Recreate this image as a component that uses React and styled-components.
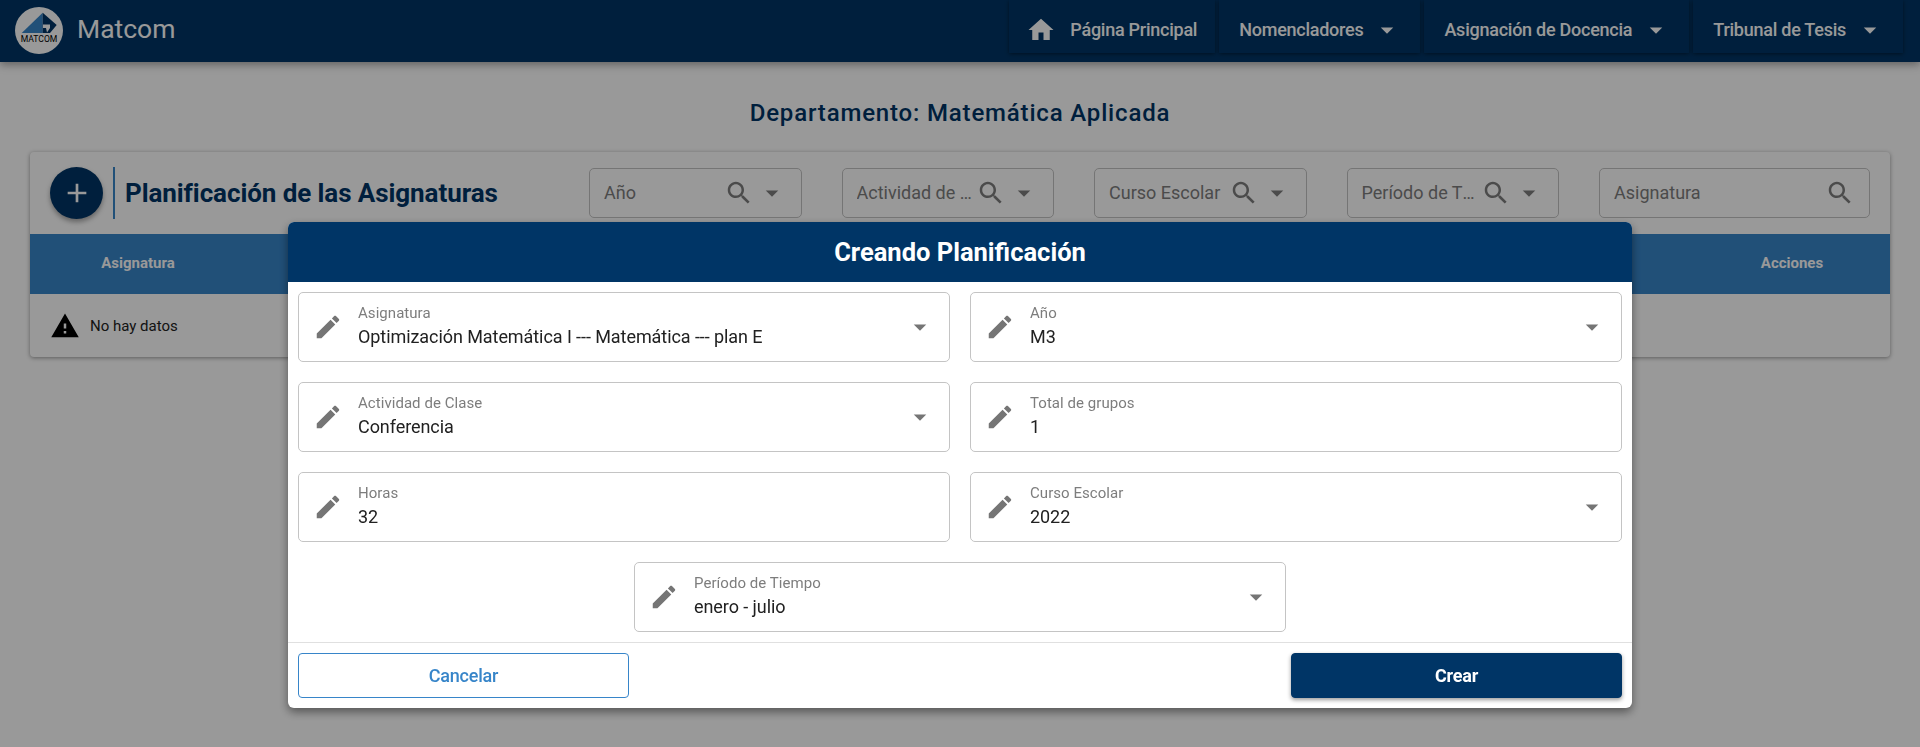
import styled, { createGlobalStyle } from 'styled-components';

const GlobalStyle = createGlobalStyle`
  html, body {
    margin: 0;
    padding: 0;
    background: #fff;
    font-family: Roboto, "Liberation Sans", sans-serif;
  }
  * {
    box-sizing: border-box;
  }
`;

const navy = '#003566';
const blue = '#3785c9';

const Page = styled.div`
  width: 100%;
  height: 747px;
  overflow: hidden;
  background: #fff;
`;

const Navbar = styled.header`
  height: 62px;
  background: ${navy};
  display: flex;
  align-items: flex-start;
  justify-content: space-between;
  padding: 0 17px 0 15px;
  box-shadow: 0 3px 8px rgba(0, 0, 0, 0.35);
`;

const Brand = styled.div`
  display: flex;
  align-items: center;
  gap: 14px;
  height: 60px;
  color: #fff;
  font-size: 26.5px;
  line-height: 58px;
`;

const BrandName = styled.span`
  margin-top: -2px;
`;

const NavMenu = styled.nav`
  display: flex;
  gap: 4px;
`;

const NavItem = styled.div`
  height: 53px;
  display: flex;
  align-items: center;
  gap: ${(p) => p.$gap || 9}px;
  padding: 6px 18px 0;
  padding-left: ${(p) => p.$left || 20}px;
  color: #fff;
  font-size: 18px;
  font-weight: 500;
  letter-spacing: -0.25px;
  box-shadow: 0 1px 4px rgba(0, 0, 0, 0.45);
`;

const Main = styled.main`
  padding: 0 30px;
`;

const Department = styled.h2`
  margin: 0;
  padding-top: 34px;
  height: 90px;
  text-align: center;
  color: ${navy};
  font-size: 24px;
  font-weight: 500;
  line-height: 34px;
  letter-spacing: 0.83px;
`;

const Card = styled.section`
  background: #fff;
  border-radius: 4px;
  box-shadow: 0 1px 4px rgba(0, 0, 0, 0.4);
`;

const CardHeader = styled.div`
  height: 82px;
  display: flex;
  align-items: center;
  padding: 0 20px;
`;

const AddButton = styled.div`
  width: 53px;
  height: 52px;
  border-radius: 50%;
  background: ${navy};
  color: #fff;
  display: flex;
  align-items: center;
  justify-content: center;
  box-shadow: 0 3px 5px rgba(0, 0, 0, 0.35);
  flex: none;
`;

const TitleBox = styled.div`
  height: 52px;
  width: 476px;
  margin-left: 10px;
  padding-left: 10px;
  border-left: 2px solid ${blue};
  display: flex;
  align-items: center;
  flex: none;
`;

const CardTitle = styled.h1`
  margin: 0;
  color: ${navy};
  font-size: 26px;
  font-weight: 700;
  letter-spacing: -0.08px;
  white-space: nowrap;
`;

const Filters = styled.div`
  display: flex;
  gap: 40px;
  flex: 1;
`;

const Filter = styled.div`
  width: ${(p) => p.$width || 212.5}px;
  height: 50px;
  flex: none;
  display: flex;
  align-items: center;
  gap: 3px;
  padding: 0 14px 0 14px;
  border: 1px solid #c4c4c4;
  border-radius: 5px;
  color: #7d7d7d;
  font-size: 18px;
`;

const FilterText = styled.span`
  flex: 1;
  min-width: 0;
  padding-bottom: 2px;
  white-space: nowrap;
  overflow: hidden;
  text-overflow: ellipsis;
`;

const TableHead = styled.div`
  height: 60px;
  background: ${blue};
  display: flex;
  justify-content: space-between;
  color: #fff;
  font-size: 15px;
  font-weight: 700;
`;

const HeadCell = styled.div`
  width: ${(p) => p.$width}px;
  padding-bottom: 2px;
  display: flex;
  align-items: center;
  justify-content: center;
`;

const EmptyRow = styled.div`
  height: 63px;
  display: flex;
  align-items: center;
  gap: 10px;
  padding-left: 20px;
  color: #222;
  font-size: 15px;
`;

const Backdrop = styled.div`
  position: fixed;
  inset: 0;
  background: rgba(0, 0, 0, 0.4);
  display: flex;
  justify-content: center;
  align-items: flex-start;
  padding-top: 222px;
`;

const Dialog = styled.div`
  width: 1344px;
  background: #fff;
  border-radius: 6px;
  overflow: hidden;
  box-shadow: 0 4px 10px rgba(0, 0, 0, 0.45);
`;

const DialogHeader = styled.div`
  height: 60px;
  background: ${navy};
  color: #fff;
  display: flex;
  align-items: center;
  justify-content: center;
  font-size: 25.5px;
  font-weight: 700;
`;

const FieldGrid = styled.div`
  display: grid;
  grid-template-columns: 1fr 1fr;
  gap: 20px;
  padding: 10px;
`;

const Field = styled.div`
  height: 70px;
  display: flex;
  align-items: center;
  gap: 15px;
  padding: 0 14px;
  border: 1px solid #c4c4c4;
  border-radius: 5px;
  ${(p) => p.$center && 'grid-column: 1 / -1; justify-self: center; width: calc(50% - 10px);'}
`;

const FieldBody = styled.div`
  flex: 1;
  display: flex;
  flex-direction: column;
  gap: 1px;
  padding-bottom: 2px;
`;

const FieldLabel = styled.span`
  color: #7d7d7d;
  font-size: 15px;
  line-height: 20px;
  letter-spacing: 0.05px;
`;

const FieldValue = styled.span`
  color: #212121;
  font-size: 18px;
  line-height: 26px;
  letter-spacing: -0.07px;
`;

const DialogFooter = styled.div`
  display: flex;
  justify-content: space-between;
  padding: 10px;
  border-top: 1px solid #e0e0e0;
`;

const Button = styled.button`
  width: 331px;
  height: 45px;
  border-radius: 4px;
  font-family: inherit;
  font-size: 18px;
  font-weight: ${(p) => (p.$primary ? 700 : 500)};
  letter-spacing: -0.2px;
  border: 1px solid ${(p) => (p.$primary ? navy : blue)};
  background: ${(p) => (p.$primary ? navy : '#fff')};
  color: ${(p) => (p.$primary ? '#fff' : blue)};
  box-shadow: ${(p) => (p.$primary ? '0 2px 4px rgba(0,0,0,0.4)' : 'none')};
`;

const Icon = ({ d, size = 30, color = 'currentColor' }) => (
  <svg width={size} height={size} viewBox="0 0 24 24" fill={color} style={{ flex: 'none', display: 'block' }}>
    <path d={d} />
  </svg>
);

const paths = {
  home: 'M10 20v-6h4v6h5v-8h3L12 3 2 12h3v8z',
  drop: 'M7 10l5 5 5-5z',
  add: 'M19 13h-6v6h-2v-6H5v-2h6V5h2v6h6v2z',
  search: 'M15.5 14h-.79l-.28-.27C15.41 12.59 16 11.11 16 9.5 16 5.91 13.09 3 9.5 3S3 5.91 3 9.5 5.91 16 9.5 16c1.61 0 3.09-.59 4.23-1.57l.27.28v.79l5 4.99L20.49 19l-4.99-5zm-6 0C7.01 14 5 11.99 5 9.5S7.01 5 9.5 5 14 7.01 14 9.5 11.99 14 9.5 14z',
  edit: 'M3 17.25V21h3.75L17.81 9.94l-3.75-3.75L3 17.25zM20.71 7.04c.39-.39.39-1.02 0-1.41l-2.34-2.34c-.39-.39-1.02-.39-1.41 0l-1.83 1.83 3.75 3.75 1.83-1.83z',
  warning: 'M1 21h22L12 2 1 21zm12-3h-2v-2h2v2zm0-4h-2v-4h2v4z',
};

const Logo = () => (
  <svg width="48" height="47" viewBox="0 0 48 47" style={{ flex: 'none' }}>
    <ellipse cx="24" cy="23.5" rx="24" ry="23.5" fill="#fff" />
    <polygon points="6.7,26 27.7,5.7 27.7,26" fill="#3785c9" />
    <polygon points="27.7,5.7 41.7,18 35,26 27.7,26" fill="#003566" />
    <polygon points="28,17.5 35,17.5 35,21 32,25.5 31,21 28,21" fill="#fff" />
    <text x="24" y="34.5" textAnchor="middle" fontSize="8.6" fontFamily="Roboto, sans-serif" fill="#000">MATCOM</text>
  </svg>
);

const filters = [
  { label: 'Año' },
  { label: 'Actividad de Clase' },
  { label: 'Curso Escolar' },
  { label: 'Período de Tiempo' },
];

const fields = [
  { label: 'Asignatura', value: 'Optimización Matemática I --- Matemática --- plan E', select: true },
  { label: 'Año', value: 'M3', select: true },
  { label: 'Actividad de Clase', value: 'Conferencia', select: true },
  { label: 'Total de grupos', value: '1' },
  { label: 'Horas', value: '32' },
  { label: 'Curso Escolar', value: '2022', select: true },
  { label: 'Período de Tiempo', value: 'enero - julio', select: true, center: true },
];

export default function App() {
  return (
    <Page>
      <GlobalStyle />
      <Navbar>
        <Brand>
          <Logo />
          <BrandName>Matcom</BrandName>
        </Brand>
        <NavMenu>
          <NavItem $left={17} $gap={14}>
            <Icon d={paths.home} />
            Página Principal
          </NavItem>
          <NavItem>
            Nomencladores
            <Icon d={paths.drop} />
          </NavItem>
          <NavItem>
            Asignación de Docencia
            <Icon d={paths.drop} />
          </NavItem>
          <NavItem>
            Tribunal de Tesis
            <Icon d={paths.drop} />
          </NavItem>
        </NavMenu>
      </Navbar>

      <Main>
        <Department>Departamento: Matemática Aplicada</Department>
        <Card>
          <CardHeader>
            <AddButton>
              <Icon d={paths.add} size={32} />
            </AddButton>
            <TitleBox>
              <CardTitle>Planificación de las Asignaturas</CardTitle>
            </TitleBox>
            <Filters>
              {filters.map((f) => (
                <Filter key={f.label}>
                  <FilterText>{f.label}</FilterText>
                  <Icon d={paths.search} />
                  <Icon d={paths.drop} />
                </Filter>
              ))}
              <Filter $width={271}>
                <FilterText>Asignatura</FilterText>
                <Icon d={paths.search} />
              </Filter>
            </Filters>
          </CardHeader>
          <TableHead>
            <HeadCell $width={216}>Asignatura</HeadCell>
            <HeadCell $width={196}>Acciones</HeadCell>
          </TableHead>
          <EmptyRow>
            <Icon d={paths.warning} color="#000" />
            No hay datos
          </EmptyRow>
        </Card>
      </Main>

      <Backdrop>
        <Dialog>
          <DialogHeader>Creando Planificación</DialogHeader>
          <FieldGrid>
            {fields.map((f) => (
              <Field key={f.label} $center={f.center}>
                <Icon d={paths.edit} color="#757575" />
                <FieldBody>
                  <FieldLabel>{f.label}</FieldLabel>
                  <FieldValue>{f.value}</FieldValue>
                </FieldBody>
                {f.select && <Icon d={paths.drop} color="#757575" />}
              </Field>
            ))}
          </FieldGrid>
          <DialogFooter>
            <Button>Cancelar</Button>
            <Button $primary>Crear</Button>
          </DialogFooter>
        </Dialog>
      </Backdrop>
    </Page>
  );
}
